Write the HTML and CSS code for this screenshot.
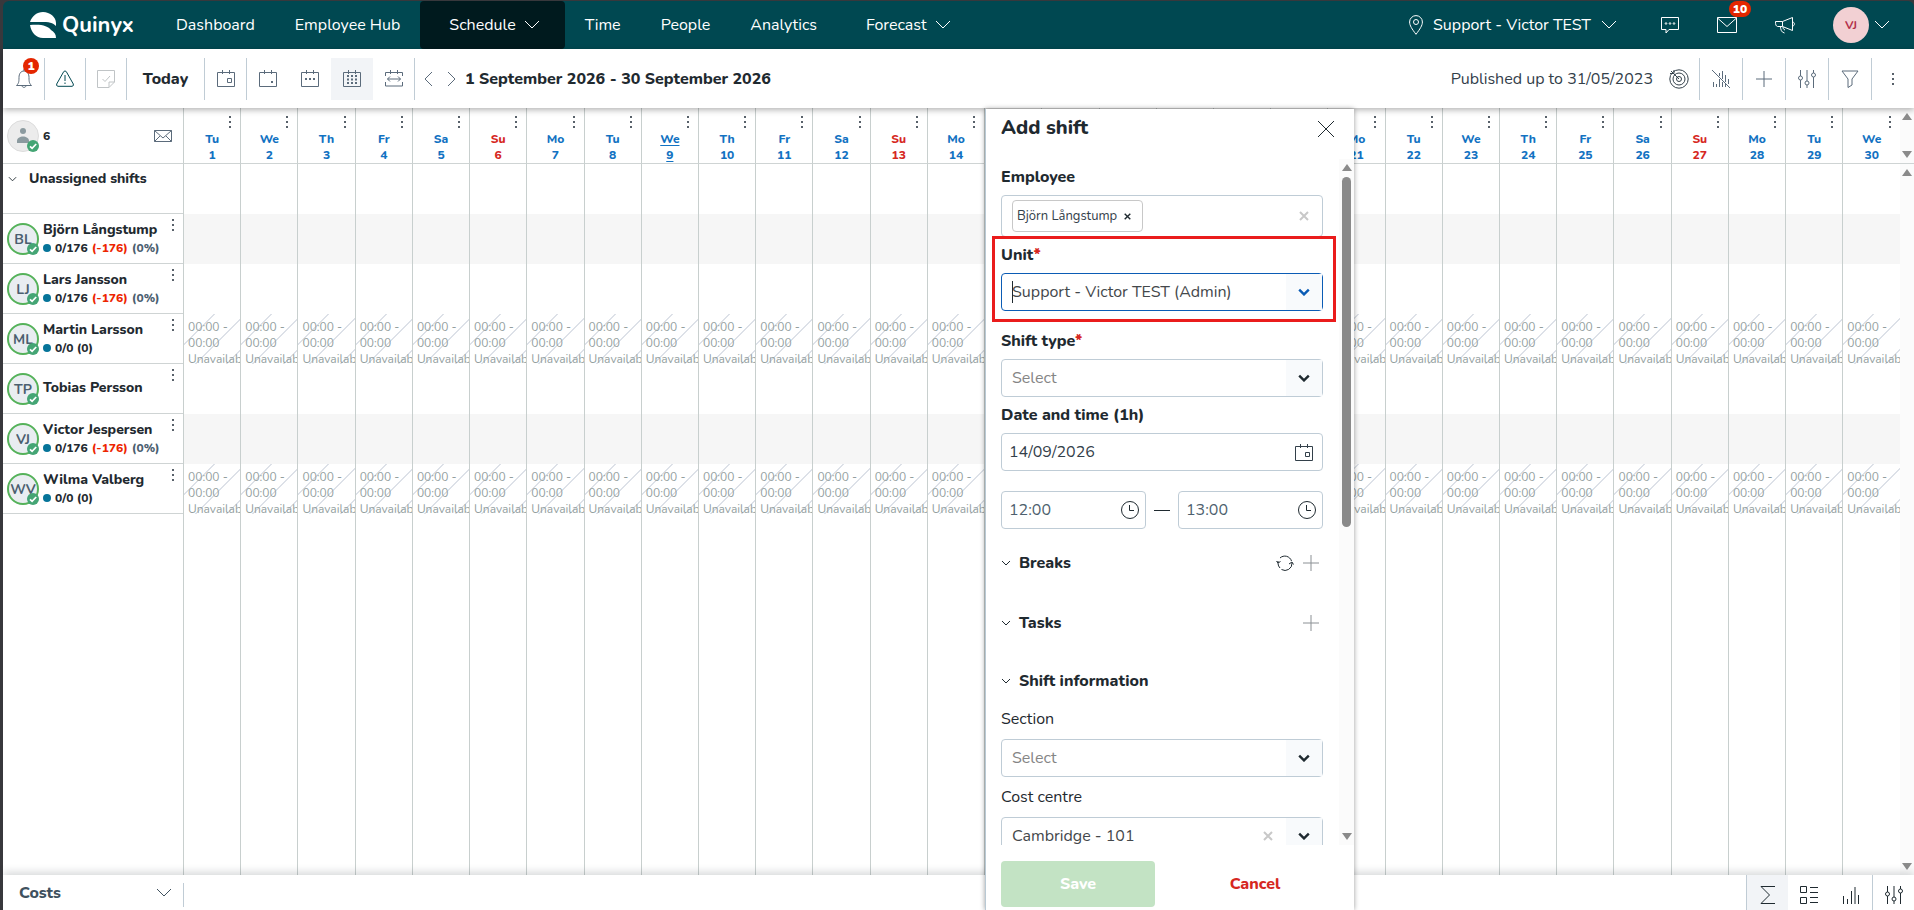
FILE: index.html
```html
<!DOCTYPE html>
<html lang="en">
<head>
    <meta charset="UTF-8">
    <meta name="viewport" content="width=device-width, initial-scale=1.0">
    <title>Quinyx - Schedule</title>
    <link rel="stylesheet" href="styles.css">
</head>
<body>
    <svg class="sprite" aria-hidden="true">
        <symbol id="chevron" viewBox="0 0 16 10"><path d="M1 1l7 7 7-7"/></symbol>
        <symbol id="small-chevron" viewBox="0 0 10 6"><path d="M1 1l4 4 4-4"/></symbol>
        <symbol id="plus" viewBox="0 0 18 18"><path d="M9 1v16M1 9h16"/></symbol>
        <symbol id="sliders" viewBox="0 0 18 18"><path d="M2.5 0v6M2.5 10v8M9 0v11M9 15v3M15.500 0v3M15.500 7v11"/><circle cx="2.500" cy="8" r="2"/><circle cx="9" cy="13" r="2"/><circle cx="15.500" cy="5" r="2"/></symbol>
        <symbol id="calendar" viewBox="0 0 18 17"><path d="M.5 2.500h17v14H.5zM5.500 0v4M12.500 0v4"/></symbol>
        <symbol id="clock" viewBox="0 0 18 18"><circle cx="9" cy="9" r="8.500"/><path d="M8.500 4v5.500H13"/></symbol>
        <symbol id="dots" viewBox="0 0 2 12"><path d="M0 0h2v2H0zM0 5h2v2H0zM0 10h2v2H0z"/></symbol>
        <symbol id="check" viewBox="0 0 12 12"><circle cx="6" cy="6" r="6" fill="#44a574"/><path d="M3 6.300l2.100 2.100L9.200 4" fill="none" stroke="#fff" stroke-width="1.700"/></symbol>
        <symbol id="cross" viewBox="0 0 10 10"><path d="M1 1l8 8M9 1l-8 8"/></symbol>
    </svg>

    <div class="app">
        <header class="topbar">
            <a class="logo" href="#">
                <svg width="26" height="26" viewBox="0 0 26 26"><path d="M0 10C2 4 7 0 13 0c7 0 13 5 13 11v3C22 9 15 10 0 10zM0 13c12-1 18 1 21 5 3 2 5 4 5 8H13C6 26 1 20 0 13z" fill="#fff"/></svg>
                <span>Quinyx</span>
            </a>
            <nav class="nav">
                <a href="#">Dashboard</a>
                <a href="#">Employee Hub</a>
                <a class="has-menu active" href="#">Schedule <svg class="icon" width="16" height="10"><use href="#chevron"/></svg></a>
                <a href="#">Time</a>
                <a href="#">People</a>
                <a href="#">Analytics</a>
                <a class="has-menu" href="#">Forecast <svg class="icon" width="16" height="10"><use href="#chevron"/></svg></a>
            </nav>
            <div class="account">
                <button class="unit-button">
                    <svg class="icon" width="14" height="20" viewBox="0 0 14 20"><path d="M7 19.300C3 14 .6 10.500.6 7a6.400 6.400 0 0 1 12.800 0c0 3.500-2.400 7-6.400 12.300z"/><circle cx="7" cy="7" r="2.500"/></svg>
                    <span>Support - Victor TEST</span>
                    <svg class="icon" width="16" height="10"><use href="#chevron"/></svg>
                </button>
                <button class="top-icon" aria-label="Chat"><svg class="icon" width="18" height="17" viewBox="0 0 18 17"><path d="M.5.5h17v12H8l-3 3.500v-3.500H.5z"/><circle cx="5" cy="6.500" r=".8"/><circle cx="9" cy="6.500" r=".8"/><circle cx="13" cy="6.500" r=".8"/></svg></button>
                <button class="top-icon" aria-label="Messages"><svg class="icon" width="20" height="16" viewBox="0 0 20 16"><path d="M.5.5h19v15H.5zM.5 1L10 9.500 19.500 1"/></svg><span class="badge wide">10</span></button>
                <button class="top-icon" aria-label="News"><svg class="icon" width="20" height="17" viewBox="0 0 20 17"><path d="M.5 4.500h7L17.500.5v13l-10-4h-5C1 9 .5 8 .5 4.500zM7.500 4.500v5M17.500 5c2.500 0 2.500 4 0 4M5.500 9.500c0 3 1 6 4 6.500M8 10c0 1.500.5 2.500 2 3"/></svg></button>
                <button class="profile"><span>VJ</span><svg class="icon" width="16" height="10"><use href="#chevron"/></svg></button>
            </div>
        </header>

        <div class="toolbar">
            <button class="tool line" aria-label="Notifications"><svg class="icon" width="16" height="19" viewBox="0 0 16 19"><path d="M.5 16.500h15c-2-2-2.500-3-2.500-8C13 4.500 11 2 8 2S3 4.500 3 8.500c0 5-.5 6-2.500 8zM8 0v2M6 16.500c0 2.500 4 2.500 4 0"/></svg><span class="badge">1</span></button>
            <button class="tool line warn" aria-label="Warnings"><svg class="icon" width="18" height="17" viewBox="0 0 18 17"><path d="M9 1q1 0 1.500 1l6.800 12q.7 2-1.300 2.300H2Q0 16 .7 14L7.500 2Q8 1 9 1zM9 5v6M9 12.500v1.500"/></svg></button>
            <button class="tool line pale" aria-label="Notes"><svg class="icon" width="18" height="18" viewBox="0 0 18 18"><path d="M.5.5h17V12L12 17.500H.5zM17.500 12H12v5.500M5.500 9l2.500 2.500L13 6"/></svg></button>
            <button class="today line">Today</button>
            <button class="tool line" aria-label="Go to date"><svg class="icon" width="18" height="17" viewBox="0 0 18 17"><use href="#calendar"/><path d="M10.500 8.500h4v4h-4z"/></svg></button>
            <button class="tool" aria-label="Day view"><svg class="icon" width="18" height="17" viewBox="0 0 18 17"><use href="#calendar"/><path class="thick" d="M12 12h2"/></svg></button>
            <button class="tool" aria-label="Week view"><svg class="icon" width="18" height="17" viewBox="0 0 18 17"><use href="#calendar"/><path class="thick" d="M4 9h2M8 9h2M12 9h2"/></svg></button>
            <button class="tool selected" aria-label="Month view"><svg class="icon" width="18" height="17" viewBox="0 0 18 17"><use href="#calendar"/><path class="thick" d="M4 6h2M8 6h2M12 6h2M4 9.500h2M8 9.500h2M12 9.500h2M4 13h2M8 13h2M12 13h2"/></svg></button>
            <button class="tool line" aria-label="Custom range"><svg class="icon" width="18" height="17" viewBox="0 0 18 17"><path d="M.5 6V2.500h17V6M.5 12v4h17v-4M5.500 0v4M12.500 0v4M2.500 9h13M5 6.500L2.500 9 5 11.500M13 6.500L15.500 9 13 11.500"/></svg></button>
            <div class="range">
                <button aria-label="Previous"><svg class="icon" width="9" height="16" viewBox="0 0 9 16"><path d="M8 1L1 8l7 7"/></svg></button>
                <button aria-label="Next"><svg class="icon" width="9" height="16" viewBox="0 0 9 16"><path d="M1 1l7 7-7 7"/></svg></button>
                <h1>1 September 2026 - 30 September 2026</h1>
            </div>
            <div class="published">
                <span>Published up to 31/05/2023</span>
                <svg class="icon" width="20" height="20" viewBox="0 0 20 20"><circle cx="10" cy="10" r="9.200"/><circle cx="10" cy="10" r="6"/><circle cx="10" cy="10" r="2.500"/><path d="M10 10L2 2M1 4.500h4V1"/></svg>
            </div>
            <button class="tool line-left" aria-label="Hide statistics"><svg class="icon" width="18" height="18" viewBox="0 0 18 18"><path d="M0 0l18 18M1.500 12v5M4.500 14v3M7.500 9v8M10.500 12v5M13.500 14v3M7.500 3v3M10.500 1v8M13.500 5v7M16.500 9v5"/></svg></button>
            <button class="tool line-left" aria-label="Add"><svg class="icon" width="18" height="18"><use href="#plus"/></svg></button>
            <button class="tool line-left" aria-label="Settings"><svg class="icon" width="18" height="18"><use href="#sliders"/></svg></button>
            <button class="tool line-left" aria-label="Filter"><svg class="icon" width="18" height="18" viewBox="0 0 18 18"><path d="M1 1h16l-6 8v6l-4 2.500V9z"/></svg></button>
            <button class="tool line-left" aria-label="More"><svg class="dots" width="2" height="12"><use href="#dots"/></svg></button>
        </div>

        <main class="schedule">
            <table class="month">
                <thead>
                    <tr id="days">
                        <th class="people">
                            <div class="people-head">
                                <span class="avatar blank"><svg width="12" height="15" viewBox="0 0 12 15"><circle cx="6" cy="3" r="3" fill="#8b9a9f"/><path d="M0 15v-2c0-6 12-6 12 0v2z" fill="#8b9a9f"/></svg><svg class="check" width="12" height="12"><use href="#check"/></svg></span>
                                <span>6</span>
                                <button aria-label="Message all"><svg class="icon" width="18" height="12" viewBox="0 0 18 12"><path d="M.5.5h17v11H.5zM.5.5L9 8 17.500.5M.5 11.500L6 6M17.500 11.500L12 6"/></svg></button>
                            </div>
                        </th>
                    </tr>
                </thead>
                <tbody id="rows"></tbody>
            </table>
            <div class="scrollbars" aria-hidden="true">
                <div class="track head"><i class="up"></i><i class="down"></i></div>
                <div class="track"><i class="up"></i><i class="down"></i></div>
            </div>

            <form class="panel">
                <div class="panel-head">
                    <h2>Add shift</h2>
                    <button type="button" aria-label="Close"><svg class="icon" width="18" height="18" viewBox="0 0 18 18"><path d="M1 1l16 16M17 1L1 17"/></svg></button>
                </div>
                <div class="panel-scroll">
                    <div class="fields">
                        <div class="field">
                            <label for="employee">Employee</label>
                            <div class="box tags">
                                <span class="tag">Björn Långstump <button type="button" aria-label="Remove"><svg class="icon" width="7" height="7"><use href="#cross"/></svg></button></span>
                                <input type="text" id="employee">
                                <button type="button" class="clear" aria-label="Clear"><svg class="icon" width="10" height="10"><use href="#cross"/></svg></button>
                            </div>
                        </div>
                        <div class="field highlighted">
                            <label for="unit">Unit<em>*</em></label>
                            <div class="box pick focused">
                                <i class="caret"></i>
                                <select id="unit"><option>Support - Victor TEST (Admin)</option></select>
                                <span class="arrow"><svg class="icon" width="12" height="8"><use href="#small-chevron"/></svg></span>
                            </div>
                        </div>
                        <div class="field">
                            <label for="type">Shift type<em>*</em></label>
                            <div class="box pick empty">
                                <select id="type"><option>Select</option></select>
                                <span class="arrow"><svg class="icon" width="12" height="8"><use href="#small-chevron"/></svg></span>
                            </div>
                        </div>
                        <div class="field date">
                            <label for="date">Date and time (1h)</label>
                            <div class="box">
                                <input type="text" id="date" value="14/09/2026">
                                <svg class="icon" width="18" height="17" viewBox="0 0 18 17"><use href="#calendar"/><path d="M10.500 8.500h4v4h-4z"/></svg>
                            </div>
                        </div>
                        <div class="times">
                            <div class="box"><input type="text" aria-label="Start time" value="12:00"><svg class="icon" width="18" height="18"><use href="#clock"/></svg></div>
                            <span class="dash"></span>
                            <div class="box"><input type="text" aria-label="End time" value="13:00"><svg class="icon" width="18" height="18"><use href="#clock"/></svg></div>
                        </div>
                        <div class="group">
                            <svg class="icon" width="10" height="6"><use href="#small-chevron"/></svg>
                            <h3>Breaks</h3>
                            <button type="button" aria-label="Recalculate breaks"><svg class="icon" width="18" height="16" viewBox="0 0 18 16"><path d="M15.500 6A7 7 0 0 0 4 3M2 6v2.500A7 7 0 0 0 4 13M.5 6l1.500 2 2.500-1.500M5.500 14.500A7 7 0 0 0 16 8M13 9l3-2 1.500 2.500"/></svg></button>
                            <button type="button" class="add" aria-label="Add break"><svg class="icon" width="18" height="18"><use href="#plus"/></svg></button>
                        </div>
                        <div class="group">
                            <svg class="icon" width="10" height="6"><use href="#small-chevron"/></svg>
                            <h3>Tasks</h3>
                            <button type="button" class="add" aria-label="Add task"><svg class="icon" width="18" height="18"><use href="#plus"/></svg></button>
                        </div>
                        <div class="group last">
                            <svg class="icon" width="10" height="6"><use href="#small-chevron"/></svg>
                            <h3>Shift information</h3>
                        </div>
                        <div class="field light">
                            <label for="section">Section</label>
                            <div class="box pick empty">
                                <select id="section"><option>Select</option></select>
                                <span class="arrow"><svg class="icon" width="12" height="8"><use href="#small-chevron"/></svg></span>
                            </div>
                        </div>
                        <div class="field light">
                            <label for="cost">Cost centre</label>
                            <div class="box pick">
                                <select id="cost"><option>Cambridge - 101</option></select>
                                <button type="button" class="clear" aria-label="Clear"><svg class="icon" width="10" height="10"><use href="#cross"/></svg></button>
                                <span class="arrow"><svg class="icon" width="12" height="8"><use href="#small-chevron"/></svg></span>
                            </div>
                        </div>
                    </div>
                    <div class="track" aria-hidden="true"><i class="up"></i><i class="thumb"></i><i class="down"></i></div>
                </div>
                <div class="panel-foot">
                    <button type="button" class="save">Save</button>
                    <button type="button" class="cancel">Cancel</button>
                </div>
            </form>
        </main>

        <footer class="bottombar">
            <button class="costs">Costs <svg class="icon" width="16" height="10"><use href="#chevron"/></svg></button>
            <span class="rule"></span>
            <div class="bottom-tools">
                <button class="selected line-left" aria-label="Totals"><svg class="icon" width="16" height="18" viewBox="0 0 16 18"><path d="M15 .5H1L9.500 9 1 17.500h14"/></svg></button>
                <button aria-label="List"><svg class="icon" width="18" height="18" viewBox="0 0 18 18"><path d="M.5.5h6v6h-6zM.5 11.500h6v6h-6zM10 1.500h8M10 6.500h8M10 11.500h8M10 16.500h8"/></svg></button>
                <button aria-label="Statistics"><svg class="icon" width="16" height="17" viewBox="0 0 16 17"><path d="M.5 9v8M4.500 12v5M8.500 4v13M12 0v17M15.500 8v9"/></svg></button>
                <button aria-label="Settings" class="line-left"><svg class="icon" width="18" height="18"><use href="#sliders"/></svg></button>
            </div>
        </footer>
    </div>

    <script src="script.js"></script>
</body>
</html>
```
FILE: styles.css
```css
* {
    box-sizing: border-box;
}
body {
    margin: 0;
    background-color: #38383c;
    color: #1f2a30;
    font-family: Nunito, Lato, sans-serif;
    font-size: 16px;
}
button, input, select {
    font: inherit;
    color: inherit;
    background: none;
    border: none;
    padding: 0;
    margin: 0;
}
button {
    cursor: pointer;
}
h1, h2, h3 {
    margin: 0;
}
.sprite {
    display: none;
}
.icon {
    display: block;
    flex: none;
    fill: none;
    stroke: currentColor;
    stroke-width: 1;
}
.app {
    display: flex;
    flex-direction: column;
    height: 100vh;
    padding: 1px 0 0 3px;
}

/* top navigation */
.topbar {
    display: flex;
    flex: none;
    height: 48px;
    background-color: #004851;
    color: #fff;
    border-radius: 6px 6px 0 0;
}
.logo {
    display: flex;
    align-items: center;
    gap: 6px;
    width: 153px;
    padding-left: 27px;
    color: #fff;
    font-size: 22px;
    font-weight: 700;
    text-decoration: none;
}
.nav {
    display: flex;
}
.nav a {
    display: flex;
    align-items: center;
    gap: 8px;
    padding: 0 20px;
    color: #fff;
    text-decoration: none;
}
.nav .has-menu {
    padding: 0 25px 0 29px;
}
.nav .active {
    background-color: #001a1e;
    border-radius: 4px;
}
.account {
    display: flex;
    align-items: center;
    margin-left: auto;
    padding-right: 24px;
}
.unit-button {
    display: flex;
    align-items: center;
    gap: 10px;
    margin-right: 44px;
}
.top-icon {
    position: relative;
    margin-right: 38px;
}
.badge {
    position: absolute;
    top: 0;
    right: 5px;
    min-width: 16px;
    height: 16px;
    border-radius: 8px;
    background-color: #e42600;
    color: #fff;
    font-size: 12px;
    font-weight: 900;
    line-height: 16px;
    text-align: center;
}
.badge.wide {
    top: -16px;
    right: -14px;
    width: 22px;
}
.profile {
    display: flex;
    align-items: center;
    gap: 5px;
}
.profile span {
    width: 36px;
    border-radius: 50%;
    background-color: #f2d0d3;
    color: #b2304a;
    font-size: 12px;
    font-weight: 700;
    line-height: 36px;
}

/* toolbar */
.toolbar {
    position: relative;
    z-index: 3;
    display: flex;
    flex: none;
    align-items: center;
    height: 59px;
    background-color: #fff;
    box-shadow: 0 2px 6px rgba(0, 0, 0, 0.3);
    color: #5b6b7b;
}
.tool {
    position: relative;
    display: flex;
    align-items: center;
    justify-content: center;
    width: 42px;
    height: 42px;
}
.tool.line-left {
    width: 43px;
}
.line {
    border-right: 1px solid #c0ccd5;
}
.line-left {
    border-left: 1px solid #c0ccd5;
}
.tool.warn, .tool.pale {
    width: 41px;
}
.warn {
    color: #004851;
}
.pale {
    color: #c0c4c6;
}
.selected {
    background-color: #f2f4f7;
}
.thick {
    stroke-width: 2;
}
.dots {
    display: block;
    flex: none;
    fill: #58616a;
}
.today {
    width: 78px;
    height: 42px;
    color: #1f2a30;
    font-size: 16px;
    font-weight: 800;
}
.range {
    display: flex;
    align-items: center;
    gap: 14px;
    padding-left: 9px;
}
.range h1 {
    margin-left: -5px;
    color: #1f2a30;
    font-size: 16px;
    font-weight: 800;
}
.published {
    display: flex;
    align-items: center;
    gap: 16px;
    margin-left: auto;
    margin-right: 10px;
    color: #33404a;
}

/* month table */
.schedule {
    position: relative;
    display: flex;
    flex: 1;
    min-height: 0;
    background-color: #fff;
}
.month {
    flex: 1;
    width: 100%;
    height: 100%;
    table-layout: fixed;
    border-collapse: separate;
    border-spacing: 0;
}
.month th, .month td {
    padding: 0;
    font-weight: 400;
    text-align: left;
}
.month .people {
    width: 180px;
}
.month .day {
    border-left: 1px solid #c8cfce;
}
.month thead th, .month .people {
    border-bottom: 1px solid #cfd4d4;
}
.month thead th {
    height: 56px;
}
.month tbody tr {
    height: 50px;
}
.month .filler, .month .filler .people {
    height: auto;
    border-bottom: none;
}
.people-head {
    display: flex;
    align-items: center;
    gap: 4px;
    padding: 0 11px 0 4px;
    font-size: 12px;
    font-weight: 800;
}
.people-head button {
    margin-left: auto;
    color: #5b6b7b;
}
.month .date-head {
    color: #1272c2;
    font-size: 12px;
    font-weight: 800;
    line-height: 16px;
    text-align: center;
    vertical-align: top;
}
.date-head .dots {
    margin: 8px 9px 3px auto;
}
.date-head a {
    display: block;
    color: inherit;
    text-decoration: none;
}
.month .date-head.sunday {
    color: #d6281f;
}
.date-head.current a {
    text-decoration: underline;
    text-underline-offset: 2px;
}
.unassigned {
    display: flex;
    align-items: center;
    gap: 12px;
    height: 49px;
    padding: 0 5px 20px;
    font-size: 14px;
    font-weight: 800;
}
.employee {
    display: flex;
    align-items: flex-start;
    gap: 4px;
    height: 49px;
    padding: 5px 9px 0 4px;
}
.employee .dots {
    margin-left: auto;
}
.avatar {
    position: relative;
    display: flex;
    flex: none;
    align-items: center;
    justify-content: center;
    width: 32px;
    height: 32px;
    border: 2px solid #55b25a;
    border-radius: 50%;
    background-color: #e9edf1;
    color: #4b5e6f;
    font-size: 14px;
    font-weight: 700;
}
.employee .avatar {
    margin-top: 4px;
}
.avatar.blank {
    border: 1px solid #dcdcdc;
    background-color: #ececec;
}
.check {
    position: absolute;
    right: -2px;
    bottom: -2px;
}
.blank .check {
    right: -1px;
    bottom: -1px;
}
.who {
    align-self: center;
    margin-top: -6px;
    font-size: 14px;
    font-weight: 800;
    line-height: 20px;
    white-space: nowrap;
}
.hours {
    display: flex;
    align-items: center;
    gap: 4px;
    font-size: 12px;
    line-height: 16px;
}
.hours i {
    width: 8px;
    height: 8px;
    border-radius: 50%;
    background-color: #067499;
}
.hours .minus {
    color: #ed2500;
}
.hours .share {
    color: #4b5e6f;
}
.band .day {
    background-color: #f6f6f6;
}
.away .day {
    background-image: repeating-linear-gradient(135deg, transparent 0 21px, #dde1e8 21px 22px);
}
.away-text {
    height: 49px;
    padding: 4px 0 0 4px;
    overflow: hidden;
    color: #949f9f;
    font-size: 12px;
    line-height: 16px;
}

/* drawn scrollbars */
.scrollbars {
    display: flex;
    flex-direction: column;
    width: 14px;
}
.track {
    display: flex;
    flex: 1;
    flex-direction: column;
    align-items: center;
    justify-content: space-between;
    padding: 5px 0;
    background-color: #fbfbfb;
}
.track.head {
    flex: none;
    height: 56px;
    border-bottom: 1px solid #cfd4d4;
}
.up, .down {
    border: 5px solid transparent;
}
.up {
    border-top: none;
    border-bottom: 7px solid #8a8a8a;
}
.down {
    border-bottom: none;
    border-top: 7px solid #8a8a8a;
}

/* add shift panel */
.panel {
    position: absolute;
    z-index: 4;
    top: 1px;
    right: 560px;
    bottom: -35px;
    display: flex;
    flex-direction: column;
    width: 369px;
    background-color: #fff;
    border-left: 1px solid #b9c9d4;
    box-shadow: 0 0 5px rgba(0, 0, 0, 0.4);
}
.panel-head {
    display: flex;
    flex: none;
    justify-content: space-between;
    height: 50px;
    padding: 7px 19px 0 15px;
}
.panel-head button {
    height: 25px;
}
h2 {
    font-size: 20px;
    font-weight: 800;
    line-height: 24px;
}
.panel-scroll {
    display: flex;
    flex: 1;
    min-height: 0;
    overflow: hidden;
}
.fields {
    flex: 1;
    min-width: 0;
    padding: 8px 16px 0 15px;
}
.panel-scroll .track {
    flex: none;
    width: 15px;
    justify-content: flex-start;
}
.thumb {
    width: 9px;
    height: 350px;
    margin: 6px 0 auto;
    border-radius: 5px;
    background-color: #8a8a8a;
}
.field {
    margin-bottom: 8px;
}
.field label {
    display: block;
    margin-bottom: 8px;
    font-weight: 800;
    line-height: 20px;
}
.field em {
    color: #d6281f;
    font-style: normal;
}
.field.light {
    margin-bottom: 10px;
}
.light label {
    margin-bottom: 10px;
    font-weight: 400;
}
.field.highlighted {
    position: relative;
    margin-bottom: 20px;
}
.highlighted::after {
    content: "";
    position: absolute;
    inset: -9px -13px -11px -9px;
    border: 3px solid #ea1c1c;
    pointer-events: none;
}
.box {
    display: flex;
    align-items: center;
    height: 38px;
    padding: 0 9px 0 7px;
    border: 1px solid #bfccd6;
    border-radius: 4px;
    color: #33404a;
}
.box input {
    flex: 1;
    min-width: 0;
    outline: none;
}
.box.tags {
    height: 42px;
    padding: 0 13px 0 10px;
}
.tag {
    display: flex;
    align-items: center;
    gap: 7px;
    height: 32px;
    padding: 0 11px 0 4px;
    border: 1px solid #c8c8c8;
    border-radius: 4px;
    font-size: 13px;
    white-space: nowrap;
}
.tag .icon {
    stroke: #1f2a30;
    stroke-width: 2;
}
.clear {
    color: #c8c8c8;
}
.clear .icon {
    stroke-width: 2;
}
.box.pick {
    position: relative;
    padding: 0;
    color: #44484b;
}
.pick select {
    flex: 1;
    min-width: 0;
    height: 100%;
    padding-left: 10px;
    appearance: none;
    outline: none;
}
.pick .clear {
    margin-right: 13px;
}
.box.empty {
    color: #858585;
}
.arrow {
    display: flex;
    align-items: center;
    justify-content: center;
    width: 36px;
    height: 100%;
    background-color: #f8fafc;
    color: #1f2a30;
    pointer-events: none;
}
.arrow .icon {
    stroke-width: 2;
}
.focused {
    border-color: #0b5cb5;
}
.focused .arrow {
    color: #0b5cb5;
}
.caret {
    position: absolute;
    left: 10px;
    top: 7px;
    width: 1px;
    height: 22px;
    background-color: #1f2a30;
}
.field.date {
    margin-bottom: 20px;
}
.times {
    display: flex;
    align-items: center;
    gap: 8px;
    margin-bottom: 24px;
}
.times .box {
    flex: 1;
    min-width: 0;
    padding-right: 6px;
    color: #4e5f6e;
}
.times .icon {
    color: #1f2a30;
}
.dash {
    width: 16px;
    height: 1px;
    background-color: #1f2a30;
}
.group {
    display: flex;
    align-items: center;
    gap: 8px;
    height: 20px;
    margin-bottom: 40px;
}
.group h3 {
    flex: 1;
    font-size: 16px;
    font-weight: 800;
}
.group .add {
    margin-right: 3px;
    color: #8b9094;
}
.group.last {
    margin: -2px 0 18px;
}
.panel-foot {
    display: flex;
    flex: none;
    height: 65px;
    padding: 16px 16px 3px 15px;
}
.panel-foot button {
    width: 154px;
    border-radius: 4px;
    font-weight: 800;
}
.save {
    background-color: #c3e3c4;
    color: #fff;
}
.cancel {
    margin-left: 23px;
    color: #d6281f;
}

/* bottom bar */
.bottombar {
    position: relative;
    z-index: 2;
    display: flex;
    flex: none;
    height: 35px;
    background-color: #fff;
    box-shadow: 0 -3px 8px rgba(60, 70, 75, 0.2);
}
.costs {
    display: flex;
    align-items: center;
    justify-content: space-between;
    width: 180px;
    padding: 0 11px 0 16px;
    color: #40515e;
    font-weight: 800;
}
.rule {
    width: 1px;
    height: 24px;
    margin-top: 8px;
    background-color: #c0ccd5;
}
.bottom-tools {
    display: flex;
    margin-left: auto;
}
.bottom-tools button {
    display: flex;
    align-items: center;
    justify-content: center;
    width: 42px;
    padding-top: 5px;
    color: #1f2a30;
}
```
FILE: script.js
```js
const names = ['Mo', 'Tu', 'We', 'Th', 'Fr', 'Sa', 'Su'];
const dayCount = 30;
const today = 9;

const employees = [
    { initials: 'BL', name: 'Björn Långstump', hours: '0/176', minus: '(-176)', share: '(0%)', band: true },
    { initials: 'LJ', name: 'Lars Jansson', hours: '0/176', minus: '(-176)', share: '(0%)' },
    { initials: 'ML', name: 'Martin Larsson', hours: '0/0 (0)', away: true },
    { initials: 'TP', name: 'Tobias Persson' },
    { initials: 'VJ', name: 'Victor Jespersen', hours: '0/176', minus: '(-176)', share: '(0%)', band: true },
    { initials: 'WV', name: 'Wilma Valberg', hours: '0/0 (0)', away: true }
];

const dots = '<svg class="dots" width="2" height="12"><use href="#dots"/></svg>';

function dayCells(content) {
    return `<td class="day">${content}</td>`.repeat(dayCount);
}

function renderDays() {
    let html = '';
    for (let day = 1; day <= dayCount; day++) {
        const name = names[day % 7];
        const sunday = name === 'Su' ? ' sunday' : '';
        const current = day === today ? ' current' : '';
        html += `<th class="day date-head${sunday}${current}">${dots}<a href="#">${name}<br>${day}</a></th>`;
    }
    document.getElementById('days').innerHTML += html;
}

function renderHours(employee) {
    if (!employee.hours) {
        return '';
    }
    let html = `<div class="hours"><i></i><span>${employee.hours}</span>`;
    if (employee.minus) {
        html += `<span class="minus">${employee.minus}</span><span class="share">${employee.share}</span>`;
    }
    return html + '</div>';
}

function renderRows() {
    let html = `<tr><td class="people"><div class="unassigned">
        <svg class="icon" width="9" height="6"><use href="#small-chevron"/></svg>Unassigned shifts</div></td>${dayCells('')}</tr>`;

    for (const employee of employees) {
        const type = employee.band ? 'band' : employee.away ? 'away' : '';
        const text = employee.away ? '<div class="away-text">00:00 - 00:00 Unavailable</div>' : '';
        html += `<tr class="${type}"><td class="people"><div class="employee">
            <span class="avatar">${employee.initials}<svg class="check" width="12" height="12"><use href="#check"/></svg></span>
            <div class="who">${employee.name}${renderHours(employee)}</div>${dots}</div></td>${dayCells(text)}</tr>`;
    }

    // The last row takes the height that is left, so the day lines reach the bottom
    html += `<tr class="filler"><td class="people"></td>${dayCells('')}</tr>`;
    document.getElementById('rows').innerHTML = html;
}

renderDays();
renderRows();
```
